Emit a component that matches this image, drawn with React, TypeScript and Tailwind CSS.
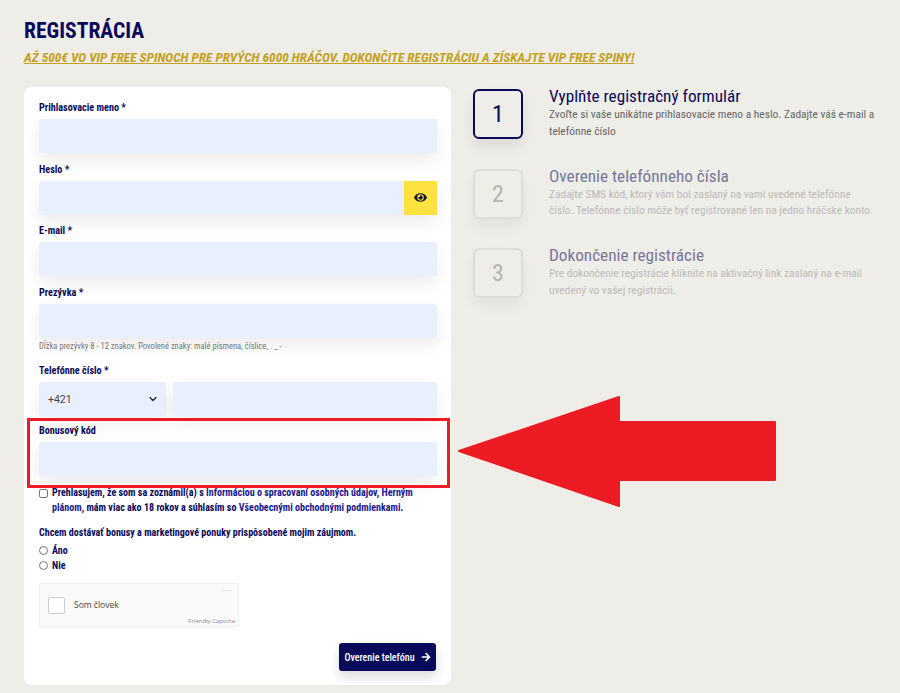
import { ChevronDown } from 'lucide-react'
import { FaArrowRight, FaEye } from 'react-icons/fa'

const labelClass = 'block h-[18px] mb-[2px] text-[10.2px] leading-[18px] font-bold text-[#0a0a5a] [font-stretch:75%]'
const fieldShadow = 'shadow-[0_8px_18px_rgba(0,0,0,0.08)]'
const inputClass = `block w-full h-[34px] rounded-[3px] bg-[#e8f0fe] ${fieldShadow}`

function Field({ label, hint }: { label: string; hint?: string }) {
  return (
    <div className="mb-[7.6px]">
      <label className={labelClass}>{label}</label>
      <input type="text" className={inputClass} />
      {hint && <p className="mt-px h-[14px] text-[8.5px] leading-[14px] text-[#777] [font-stretch:75%]">{hint}</p>}
    </div>
  )
}

const steps = [
  {
    n: '1',
    title: 'Vyplňte registračný formulár',
    text: 'Zvoľte si vaše unikátne prihlasovacie meno a heslo. Zadajte váš e-mail a telefónne číslo',
    active: true,
  },
  {
    n: '2',
    title: 'Overenie telefónneho čísla',
    text: 'Zadajte SMS kód, ktorý vám bol zaslaný na vami uvedené telefónne číslo. Telefónne číslo môže byť registrované len na jedno hráčske konto.',
    active: false,
  },
  {
    n: '3',
    title: 'Dokončenie registrácie',
    text: 'Pre dokončenie registrácie kliknite na aktivačný link zaslaný na e-mail uvedený vo vašej registrácii.',
    active: false,
  },
]

export default function App() {
  return (
    <div className="relative w-[900px] h-[693px] overflow-hidden bg-[#eeede7] font-['Roboto',sans-serif] px-[24px] pt-[18px]">
      <h1 className="text-[21.6px] leading-[26px] font-bold text-[#0a0a5a] [font-stretch:75%]">REGISTRÁCIA</h1>
      <p className="mt-[6px] text-[13.35px] leading-[16px] font-bold italic underline text-[#c4a01c] whitespace-nowrap [font-stretch:75%]">
        AŽ 500€ VO VIP FREE SPINOCH PRE PRVÝCH 6000 HRÁČOV. DOKONČITE REGISTRÁCIU A ZÍSKAJTE VIP FREE SPINY!
      </p>

      <div className="mt-[21px] flex items-start">
        {/* formular */}
        <form className="w-[427px] h-[598px] shrink-0 rounded-[8px] bg-white pl-[15px] pr-[14px] pt-[12px]">
          <Field label="Prihlasovacie meno *" />
          <div className="mb-[7.6px]">
            <label className={labelClass}>Heslo *</label>
            <div className={`flex h-[34px] rounded-[3px] ${fieldShadow}`}>
              <input type="password" className="min-w-0 flex-1 bg-[#e8f0fe] rounded-l-[3px]" />
              <button type="button" className="w-[33px] flex items-center justify-center bg-[#ffe23f]">
                <FaEye size={13} className="text-[#14142e]" />
              </button>
            </div>
          </div>
          <Field label="E-mail *" />
          <Field label="Prezývka *" hint="Dĺžka prezývky 8 - 12 znakov. Povolené znaky: malé písmena, číslice, . _ -" />
          <div className="mt-[9.6px]">
            <label className={labelClass}>Telefónne číslo *</label>
            <div className="flex gap-[7px]">
              <div className={`w-[127px] h-[34px] pl-[9px] pr-[7px] flex items-center justify-between rounded-[3px] bg-[#e8f0fe] ${fieldShadow}`}>
                <span className="text-[10.5px] text-[#444]">+421</span>
                <ChevronDown size={12} strokeWidth={2.5} className="text-[#222]" />
              </div>
              <input type="tel" className={`min-w-0 flex-1 h-[34px] rounded-[3px] bg-[#e8f0fe] ${fieldShadow}`} />
            </div>
          </div>
          <div className="mt-[6px]">
            <label className={labelClass}>Bonusový kód</label>
            <input type="text" className={inputClass} />
          </div>

          <div className="mt-[8.5px] flex items-start gap-[4px]">
            <input type="checkbox" className="mt-[4px] w-[9px] h-[9px] shrink-0 appearance-none rounded-[2px] border border-[#767676] bg-white" />
            <p className="text-[10.05px] leading-[15px] font-bold text-[#0a0a5a] [font-stretch:75%]">
              Prehlasujem, že som sa zoznámil(a) s <span className="text-[#1a1a8c]">Informáciou o spracovaní osobných údajov</span>, <span className="text-[#1a1a8c]">Herným plánom</span>, mám viac ako 18 rokov a súhlasím so <span className="text-[#1a1a8c]">Všeobecnými obchodnými podmienkami</span>.
            </p>
          </div>

          <p className="mt-[10px] text-[10.05px] leading-[15px] font-bold text-[#0a0a5a] [font-stretch:75%]">
            Chcem dostávať bonusy a marketingové ponuky prispôsobené mojim záujmom.
          </p>
          <div className="mt-[3px] flex flex-col">
            {['Áno', 'Nie'].map((v) => (
              <label key={v} className="h-[15px] flex items-center gap-[4px] text-[10.05px] font-bold text-[#0a0a5a] [font-stretch:75%]">
                <span className="w-[9px] h-[9px] rounded-full border border-[#767676] bg-white" />
                {v}
              </label>
            ))}
          </div>

          {/* captcha */}
          <div className="relative mt-[10.5px] w-[200px] h-[44px] rounded-[2px] border border-[#eeeeee] bg-[#fafafa] flex items-center">
            <span className="ml-[8px] w-[17px] h-[17px] rounded-[2px] border border-[#ccc] bg-white" />
            <span className="ml-[9px] text-[8.5px] text-[#444] font-['Open_Sans',sans-serif]">Som človek</span>
            <span className="absolute right-[6px] top-0 text-[8px] leading-[10px] tracking-[1px] text-[#aaa]">...</span>
            <span className="absolute right-[3px] bottom-[1px] text-[6px] leading-[8px] text-[#888] font-['Open_Sans',sans-serif]">Friendly Captcha</span>
          </div>

          <div className="mt-[16px] flex justify-end pr-px">
            <button type="button" className="h-[28px] w-[97px] flex items-center justify-center gap-[6px] rounded-[3px] bg-[#0a0a5a] text-[10px] font-medium whitespace-nowrap text-white shadow-[0_6px_12px_rgba(0,0,0,0.15)] [font-stretch:75%]">
              Overenie telefónu
              <FaArrowRight size={10} />
            </button>
          </div>
        </form>

        {/* kroky */}
        <div className="ml-[22px] pt-[2px] flex flex-col gap-[29.7px] w-[405px]">
          {steps.map((s) => (
            <div key={s.n} className="flex h-[50px] gap-[26px]">
              <div
                className={
                  s.active
                    ? 'w-[50px] h-[50px] shrink-0 flex items-center justify-center rounded-[6px] border-[2.5px] border-[#0a0a5a] text-[24px] text-[#0a0a5a] shadow-[0_8px_14px_rgba(0,0,0,0.08)] [font-stretch:85%]'
                    : 'w-[50px] h-[50px] shrink-0 flex items-center justify-center rounded-[6px] border-2 border-[#ddddd6] text-[24px] text-[#b5b5af] shadow-[0_8px_14px_rgba(0,0,0,0.05)] [font-stretch:85%]'
                }
              >
                {s.n}
              </div>
              <div className="-mt-[2px] w-[328px]">
                <h3 className={s.active ? 'text-[17.2px] leading-[18px] text-[#0a0a5a] [font-stretch:75%]' : 'text-[17.2px] leading-[18px] text-[#77779c] [font-stretch:75%]'}>{s.title}</h3>
                <p className={s.active ? 'mt-px text-[11.45px] leading-[16.5px] text-[#666] [font-stretch:75%]' : 'mt-px text-[11.45px] leading-[16.5px] text-[#bbb] [font-stretch:75%]'}>{s.text}</p>
              </div>
            </div>
          ))}
        </div>
      </div>

      {/* zvyraznenie */}
      <div className="absolute left-[27px] top-[418px] w-[423px] h-[70px] border-[3px] border-[#ed1c24]" />
      <svg className="absolute left-0 top-0" width="900" height="693" viewBox="0 0 900 693">
        <path d="M459 451 L619 397 V422 H775 V480 H619 V506 Z" fill="#ed1c24" stroke="#ed1c24" strokeWidth="2" strokeLinejoin="round" />
      </svg>
    </div>
  )
}
